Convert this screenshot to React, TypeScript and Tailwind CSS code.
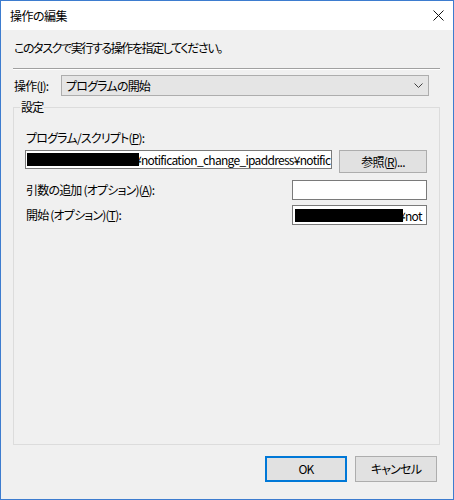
import React from "react";

const Chevron = () => (
  <svg width="9" height="5" viewBox="0 0 9 5" className="block">
    <path d="M0.5 0.5 L4.5 4.5 L8.5 0.5" fill="none" stroke="#404040" strokeWidth="1" />
  </svg>
);

const CloseX = () => (
  <svg width="11" height="11" viewBox="0 0 11 11" className="block">
    <path d="M0.5 0.5 L10.5 10.5 M10.5 0.5 L0.5 10.5" fill="none" stroke="#111" strokeWidth="1" />
  </svg>
);

export default function App() {
  return (
    <div className="w-[454px] h-[500px] border border-[#3d7ccf] flex flex-col bg-[#f0f0f0] text-[12px] leading-[16px] tracking-[-0.8px] text-black font-['Noto_Sans_CJK_JP','Noto_Sans',sans-serif] [font-feature-settings:'palt']">
      {/* title bar */}
      <div className="h-[29px] bg-white flex items-center justify-between pl-[9px] pr-[9px] shrink-0">
        <span className="text-[12px] tracking-[-0.5px]">操作の編集</span>
        <CloseX />
      </div>
      {/* body */}
      <div className="flex-1 flex flex-col px-[12px]">
        <div className="mt-[10px] pl-[1px] tracking-[-1.4px]">このタスクで実行する操作を指定してください。</div>
        <div className="mt-[12px] h-[1px] bg-[#a0a0a0] mr-[1px]" />
        <div className="h-[1px] bg-white mr-[1px]" />
        <div className="mt-[5px] flex items-center h-[21px]">
          <span className="pl-[1px] w-[48px]">操作(<span className="underline">I</span>):</span>
          <div className="w-[368px] h-[21px] bg-[#e5e5e5] border border-[#adadad] flex items-center justify-between pl-[4px] pr-[5px]">
            <span>プログラムの開始</span>
            <Chevron />
          </div>
        </div>
        {/* group box */}
        <div className="relative mt-[11px] h-[338px] border border-[#dcdcdc] mr-[1px] pl-[11px] pr-[12px] pt-[22px] flex flex-col">
          <span className="absolute -top-[9px] left-[6px] bg-[#f0f0f0] px-[1px]">設定</span>
          <div className="pl-[1px]">
            プログラム/スクリプト(<span className="underline">P</span>):
          </div>
          <div className="mt-[4px] flex items-start justify-between">
            <div className="relative w-[307px] h-[19px] bg-white border border-[#7a7a7a] flex items-center overflow-hidden pl-[1px] whitespace-nowrap">
              <div className="relative z-10 w-[112px] h-[13px] bg-black shrink-0" />
              <span className="-ml-[4px] leading-[15px] tracking-[-0.7px]">¥notification_change_ipaddress¥notific</span>
            </div>
            <div className="w-[88px] h-[23px] bg-[#e1e1e1] border border-[#adadad] flex items-center justify-center">
              参照(<span className="underline">R</span>)...
            </div>
          </div>
          <div className="mt-[7px] flex items-center justify-between h-[20px]">
            <span className="pl-[1px]">引数の追加 (オプション)(<span className="underline">A</span>):</span>
            <div className="w-[135px] h-[20px] bg-white border border-[#7a7a7a]" />
          </div>
          <div className="mt-[5px] flex items-center justify-between h-[20px]">
            <span className="pl-[1px]">開始 (オプション)(<span className="underline">T</span>):</span>
            <div className="w-[135px] h-[20px] bg-white border border-[#7a7a7a] flex items-center overflow-hidden pl-[2px] whitespace-nowrap">
              <div className="relative z-10 w-[108px] h-[13px] bg-black shrink-0" />
              <span className="-ml-[4px] leading-[15px] tracking-[-0.7px]">¥not</span>
            </div>
          </div>
        </div>
        <div className="mt-[11px] flex justify-end gap-[8px] pr-[4px]">
          <div className="w-[82px] h-[26px] bg-[#e1e1e1] border-2 border-[#0078d7] flex items-center justify-center">OK</div>
          <div className="w-[82px] h-[26px] bg-[#e1e1e1] border border-[#adadad] flex items-center justify-center">キャンセル</div>
        </div>
      </div>
    </div>
  );
}
